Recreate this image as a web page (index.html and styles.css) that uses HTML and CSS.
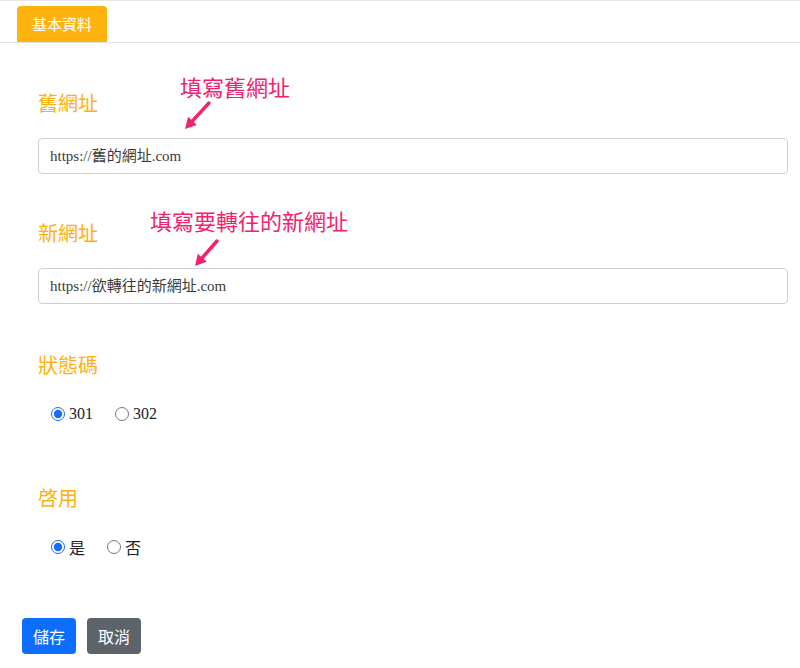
FILE: index.html
```html
<!DOCTYPE html>
<html lang="zh-Hant">
<head>
    <meta charset="UTF-8">
    <meta name="viewport" content="width=device-width, initial-scale=1.0">
    <title>轉址設定</title>
    <link rel="stylesheet" href="styles.css">
</head>
<body>
    <div class="tabs">
        <div class="tab">基本資料</div>
    </div>

    <form class="form">
        <div class="field field-first">
            <label class="label">舊網址</label>
            <input class="input" type="text" value="https://舊的網址.com">
            <span class="note note-old">填寫舊網址</span>
            <svg class="arrow arrow-old" width="35" height="35" viewBox="0 0 35 35">
                <line x1="29" y1="4" x2="12.5" y2="21.9" stroke="#f2226f" stroke-width="3.5" stroke-linecap="round"/>
                <polygon points="5,30 16.9,26 8.1,17.8" fill="#f2226f"/>
            </svg>
        </div>

        <div class="field">
            <label class="label">新網址</label>
            <input class="input" type="text" value="https://欲轉往的新網址.com">
            <span class="note note-new">填寫要轉往的新網址</span>
            <svg class="arrow arrow-new" width="35" height="35" viewBox="0 0 35 35">
                <line x1="27" y1="5" x2="12.3" y2="21.75" stroke="#f2226f" stroke-width="3.5" stroke-linecap="round"/>
                <polygon points="5,30 16.8,25.75 7.8,17.75" fill="#f2226f"/>
            </svg>
        </div>

        <div class="field field-radio">
            <label class="label">狀態碼</label>
            <div class="radios">
                <label class="radio"><input type="radio" name="code" checked>301</label>
                <label class="radio"><input type="radio" name="code">302</label>
            </div>
        </div>

        <div class="field field-radio field-last">
            <label class="label">啓用</label>
            <div class="radios">
                <label class="radio"><input type="radio" name="active" checked>是</label>
                <label class="radio"><input type="radio" name="active">否</label>
            </div>
        </div>

        <div class="actions">
            <button type="button" class="btn btn-save">儲存</button>
            <button type="button" class="btn btn-cancel">取消</button>
        </div>
    </form>
</body>
</html>
```

FILE: styles.css
```css
body {
    margin: 0;
    border-top: 1px solid #e6e6e6;
    font-family: "Noto Sans CJK TC", "Noto Sans", sans-serif;
    color: #212529;
    background: #fff;
}

.tabs {
    margin-top: 5px;
    padding-left: 17px;
    border-bottom: 1px solid #dee2e6;
    display: flex;
}
.tab {
    width: 90px;
    height: 36px;
    line-height: 36px;
    text-align: center;
    font-size: 15px;
    color: #fff;
    background: #ffb30f;
    border-radius: 4px 4px 0 0;
}

.form {
    padding: 45px 12px 0 22px;
}

.field {
    position: relative;
    margin-left: 16px;
    margin-bottom: 46px;
}
.field-first { margin-bottom: 44px; }
.label {
    display: block;
    font-size: 20px;
    line-height: 30px;
    color: #ffb00f;
    margin-bottom: 20px;
}
.input {
    display: block;
    box-sizing: border-box;
    width: 100%;
    height: 36px;
    padding: 0 11px 3px;
    border: 1px solid #ccd1d9;
    border-radius: 4px;
    font-family: "Liberation Serif", "Noto Sans CJK TC", serif;
    font-size: 15px;
    color: #3a3a3a;
    outline: none;
}

.note {
    position: absolute;
    font-size: 22px;
    line-height: 22px;
    font-weight: 400;
    color: #f2226f;
    white-space: nowrap;
}
.note-old { left: 142px; top: -13px; }
.note-new { left: 112px; top: -9px; }

.arrow { position: absolute; }
.arrow-old { left: 142px; top: 11px; }
.arrow-new { left: 152px; top: 18px; }

.field-radio .label { margin-bottom: 22px; }
.field-radio { margin-bottom: 57px; }
.field-last { margin-bottom: 59px; }

.radios {
    display: flex;
    gap: 22px;
    padding-left: 13px;
    height: 24px;
    align-items: center;
}
.radio {
    display: flex;
    align-items: center;
    font-family: "Liberation Serif", "Noto Sans CJK TC", serif;
    font-size: 16px;
    color: #222;
}
.radio input {
    margin: 0 4px 0 0;
    width: 14px;
    height: 14px;
    accent-color: #1a6cf5;
}

.actions {
    display: flex;
    gap: 11px;
}
.btn {
    height: 36px;
    padding: 0 11px;
    border: none;
    border-radius: 4px;
    font-family: "Noto Sans CJK TC", "Noto Sans", sans-serif;
    font-size: 16px;
    color: #fff;
    cursor: pointer;
}
.btn-save { background: #0d6efd; }
.btn-cancel { background: #5c636a; }
```
